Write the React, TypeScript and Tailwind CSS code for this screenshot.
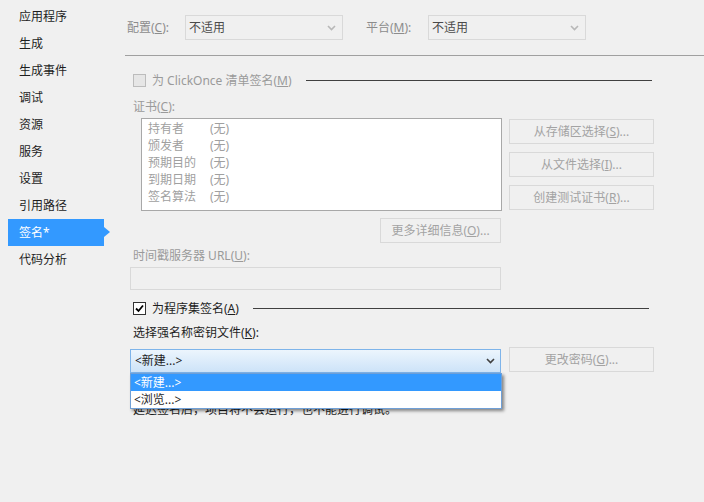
import React from "react";

const F = { fontFamily: '"Noto Sans", "Noto Sans CJK SC", sans-serif' };

function Chevron({ color = "#a8a8a8" }: { color?: string }) {
  return (
    <svg width="9" height="6" viewBox="0 0 9 6" className="shrink-0">
      <path d="M1 1 L4.5 4.5 L8 1" fill="none" stroke={color} strokeWidth="1.6" />
    </svg>
  );
}

function DisSelect({ w }: { w: string }) {
  return (
    <div className={`${w} h-[25px] border border-[#d9d9d9] bg-[#f0f0f0] flex items-center pl-[3px] pr-[6px] justify-between`}>
      <span className="text-[12px] text-[#4a4a4a]">不适用</span>
      <Chevron color="#b8b8b8" />
    </div>
  );
}

function DisButton({ children, className = "" }: { children: React.ReactNode; className?: string }) {
  return (
    <div className={`h-[25px] border border-[#d9d9d9] bg-[#f0f0f0] flex items-center justify-center text-[12px] text-[#a3a3a3] ${className}`}>
      {children}
    </div>
  );
}

const navItems = ["应用程序", "生成", "生成事件", "调试", "资源", "服务", "设置", "引用路径", "签名*", "代码分析"];

export default function App() {
  return (
    <div className="relative w-[704px] h-[502px] bg-[#f0f0f0] flex overflow-hidden" style={F}>
      {/* Nav */}
      <div className="w-[125px] shrink-0 pt-[3px] pl-[8px]">
        {navItems.map((t) => {
          const sel = t === "签名*";
          return (
            <div
              key={t}
              className={`relative h-[27px] w-[96px] flex items-center pl-[11px] text-[12px] ${
                sel ? "bg-[#3399ff] text-white" : "text-[#1e1e1e]"
              }`}
            >
              {t}
              {sel && (
                <div className="absolute left-[96px] top-[8px] w-0 h-0 border-y-[5px] border-y-transparent border-l-[6px] border-l-[#3399ff]" />
              )}
            </div>
          );
        })}
      </div>

      {/* Main */}
      <div className="flex-1 flex flex-col">
        <div className="pt-[15px] pl-[2px] flex items-center">
          <span className="w-[58px] text-[12px] text-[#8c8c8c]">
            配置(<u>C</u>):
          </span>
          <DisSelect w="w-[158px]" />
          <span className="ml-[23px] w-[62px] text-[12px] text-[#8c8c8c]">
            平台(<u>M</u>):
          </span>
          <DisSelect w="w-[158px]" />
        </div>
        <div className="mt-[15px] h-px bg-[#a0a0a0]" />

        <div className="pl-[8px] flex flex-col">
          {/* ClickOnce */}
          <div className="mt-[18px] h-[13px] w-[519px] flex items-center">
            <div className="w-[13px] h-[13px] border border-[#bcbcbc] bg-[#e6e6e6] shrink-0" />
            <span className="ml-[6px] text-[12px] text-[#9a9a9a] whitespace-nowrap">
              为 ClickOnce 清单签名(<u>M</u>)
            </span>
            <div className="ml-[14px] flex-1 h-px bg-[#404040]" />
          </div>

          <div className="mt-[12px] h-[16px] flex items-center text-[12px] text-[#9a9a9a]">
            证书(<u>C</u>):
          </div>

          <div className="mt-[3px] flex">
            <div className="ml-[8px] w-[361px] h-[93px] border border-[#a8a8a8] bg-white pt-[1px] pl-[6px]">
              {[
                ["持有者", "(无)"],
                ["颁发者", "(无)"],
                ["预期目的", "(无)"],
                ["到期日期", "(无)"],
                ["签名算法", "(无)"],
              ].map(([a, b]) => (
                <div key={a} className="h-[17px] flex items-center text-[12px] text-[#a0a0a0]">
                  <span className="w-[62px]">{a}</span>
                  <span>{b}</span>
                </div>
              ))}
            </div>
            <div className="ml-[7px] mt-px flex flex-col gap-[8px]">
              <DisButton className="w-[145px]">
                从存储区选择(<u>S</u>)...
              </DisButton>
              <DisButton className="w-[145px]">
                从文件选择(<u>I</u>)...
              </DisButton>
              <DisButton className="w-[145px]">
                创建测试证书(<u>R</u>)...
              </DisButton>
            </div>
          </div>

          <DisButton className="mt-[7px] ml-[247px] w-[121px]">
            更多详细信息(<u>O</u>)...
          </DisButton>

          <div className="mt-[5px] h-[16px] flex items-center text-[12px] text-[#9a9a9a]">
            时间戳服务器 URL(<u>U</u>):
          </div>
          <div className="mt-[3px] -ml-[3px] w-[371px] h-[23px] border border-[#d9d9d9] bg-[#f0f0f0]" />

          {/* Sign assembly */}
          <div className="mt-[12px] h-[13px] w-[516px] flex items-center">
            <div className="w-[13px] h-[13px] border border-[#333333] bg-white shrink-0 flex items-center justify-center">
              <svg width="9" height="9" viewBox="0 0 9 9">
                <path d="M1 4.5 L3.5 7 L8 1.5" fill="none" stroke="#000" strokeWidth="1.8" />
              </svg>
            </div>
            <span className="ml-[6px] text-[12px] text-[#1e1e1e] whitespace-nowrap">
              为程序集签名(<u>A</u>)
            </span>
            <div className="ml-[14px] flex-1 h-px bg-[#404040]" />
          </div>

          <div className="mt-[10px] h-[16px] flex items-center text-[12px] text-[#1e1e1e]">
            选择强名称密钥文件(<u>K</u>):
          </div>

          <div className="mt-[6px] flex items-start">
            <div className="mt-[2px] -ml-[3px] w-[371px] h-[24px] border border-[#7eb4ea] bg-linear-to-b from-[#ecf5fd] to-[#cde3f8] flex items-center justify-between pl-[4px] pr-[5px]">
              <span className="text-[12px] text-[#1e1e1e]">&lt;新建...&gt;</span>
              <Chevron color="#404040" />
            </div>
            <DisButton className="ml-[8px] w-[145px]">
              更改密码(<u>G</u>)...
            </DisButton>
          </div>

          <div className="mt-[29px] h-[16px] flex items-center text-[12px] text-[#1e1e1e]">
            延迟签名后，项目将不会运行，也不能进行调试。
          </div>
        </div>
      </div>

      {/* Dropdown list overlay */}
      <div className="absolute left-[130px] top-[373px] w-[372px] border border-[#6f9fd6] bg-white shadow-[2px_2px_3px_rgba(0,0,0,0.45)]">
        <div className="h-[17px] bg-[#3399ff] text-white text-[12px] flex items-center pl-[3px]">&lt;新建...&gt;</div>
        <div className="h-[17px] bg-white text-[#1e1e1e] text-[12px] flex items-center pl-[3px]">&lt;浏览...&gt;</div>
      </div>
    </div>
  );
}
